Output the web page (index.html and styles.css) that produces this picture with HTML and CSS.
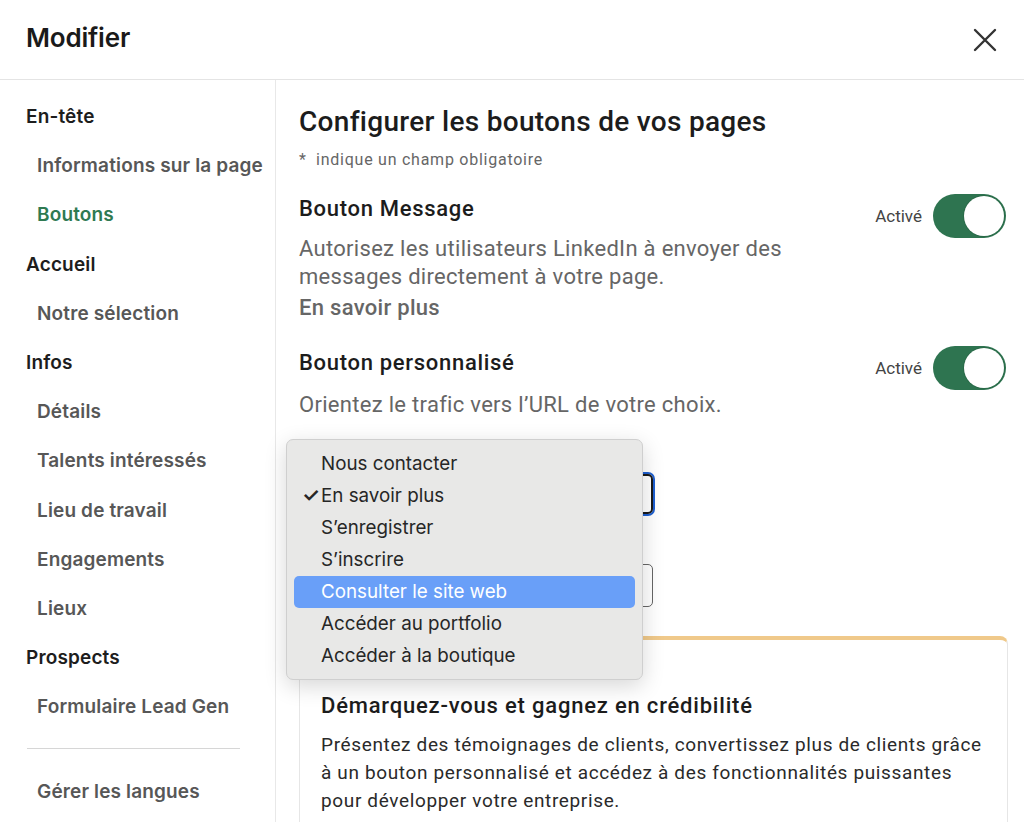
FILE: index.html
```html
<!DOCTYPE html>
<html lang="fr">
<head>
<meta charset="utf-8">
<title>Modifier</title>
<link rel="stylesheet" href="styles.css">
</head>
<body>
<header class="header">
  <h1 class="header-title">Modifier</h1>
  <button class="close" aria-label="Fermer">
    <svg width="24" height="24" viewBox="0 0 24 24"><path d="M2 2 L22 22 M22 2 L2 22" stroke="#333" stroke-width="2.4" stroke-linecap="round" fill="none"/></svg>
  </button>
</header>
<div class="layout">
  <nav class="sidebar">
    <div class="nav-head">En-tête</div>
    <div class="nav-item">Informations sur la page</div>
    <div class="nav-item active">Boutons</div>
    <div class="nav-head">Accueil</div>
    <div class="nav-item">Notre sélection</div>
    <div class="nav-head">Infos</div>
    <div class="nav-item">Détails</div>
    <div class="nav-item">Talents intéressés</div>
    <div class="nav-item">Lieu de travail</div>
    <div class="nav-item">Engagements</div>
    <div class="nav-item">Lieux</div>
    <div class="nav-head">Prospects</div>
    <div class="nav-item">Formulaire Lead Gen</div>
    <hr class="nav-divider">
    <div class="nav-item">Gérer les langues</div>
  </nav>
  <main class="main">
    <h2 class="main-title">Configurer les boutons de vos pages</h2>
    <p class="required">*&nbsp; indique un champ obligatoire</p>

    <section class="setting first">
      <div class="setting-text">
        <h3 class="setting-title">Bouton Message</h3>
        <p class="setting-desc">Autorisez les utilisateurs LinkedIn à envoyer des messages directement à votre page.</p>
        <p class="setting-link">En savoir plus</p>
      </div>
      <div class="toggle-group">
        <span class="toggle-label">Activé</span>
        <span class="toggle"><span class="knob"></span></span>
      </div>
    </section>

    <section class="setting second">
      <div class="setting-text">
        <h3 class="setting-title">Bouton personnalisé</h3>
        <p class="setting-desc desc2">Orientez le trafic vers l’URL de votre choix.</p>
      </div>
      <div class="toggle-group">
        <span class="toggle-label">Activé</span>
        <span class="toggle"><span class="knob"></span></span>
      </div>
    </section>

    <div class="form">
      <div class="select focused"></div>
      <div class="select second-select"></div>
    </div>

    <div class="card">
      <h3 class="card-title">Démarquez-vous et gagnez en crédibilité</h3>
      <p class="card-text">Présentez des témoignages de clients, convertissez plus de clients grâce à un bouton personnalisé et accédez à des fonctionnalités puissantes pour développer votre entreprise.</p>
    </div>

    <ul class="menu">
      <li class="menu-item">Nous contacter</li>
      <li class="menu-item checked"><span class="check">✓</span>En savoir plus</li>
      <li class="menu-item">S’enregistrer</li>
      <li class="menu-item">S’inscrire</li>
      <li class="menu-item hover">Consulter le site web</li>
      <li class="menu-item">Accéder au portfolio</li>
      <li class="menu-item">Accéder à la boutique</li>
    </ul>
  </main>
</div>
</body>
</html>
```
FILE: styles.css
```css
* { box-sizing: border-box; }
html, body { margin: 0; padding: 0; background: #fff; }
body {
  width: 1024px;
  height: 822px;
  overflow: hidden;
  font-family: Inter, "Open Sans", "Liberation Sans", sans-serif;
  color: #1d1d1d;
}

.header {
  height: 80px;
  border-bottom: 1px solid #e4e4e4;
  display: flex;
  align-items: center;
  justify-content: space-between;
  padding: 0 27px 0 26px;
}
.header-title {
  margin: 0 0 4px 0;
  font-size: 26px;
  font-weight: 600;
  letter-spacing: -0.2px;
  color: #1a1a1a;
}
.close {
  border: 0;
  background: none;
  padding: 0;
  width: 24px;
  height: 24px;
  margin-top: 1px;
}

.layout {
  display: flex;
  height: 742px;
}

.sidebar {
  width: 276px;
  flex: none;
  border-right: 1px solid #e8e8e8;
  padding: 12px 0 0 26px;
}
.nav-head, .nav-item {
  height: 49.2px;
  line-height: 49px;
  font-size: 19px;
  font-weight: 600;
  letter-spacing: 0.15px;
  white-space: nowrap;
}
.nav-head { color: #1d1d1d; }
.nav-item { padding-left: 11px; color: #575757; }
.nav-item.active { color: #2f7a52; }
.nav-divider {
  margin: 17px 0 18px 1px;
  width: 213px;
  border: 0;
  border-top: 1px solid #d6d6d6;
}

.main {
  position: relative;
  flex: 1;
  padding: 26px 16px 0 23px;
  font-family: Roboto, "Liberation Sans", sans-serif;
}
.main-title {
  margin: 0;
  font-size: 28px;
  line-height: 32px;
  font-weight: 500;
  color: #1c1c1c;
  letter-spacing: 0.3px;
}
.required {
  margin: 12px 0 0 0;
  font-size: 16px;
  line-height: 20px;
  letter-spacing: 0.75px;
  color: #666;
}

.setting {
  display: flex;
  justify-content: space-between;
  align-items: flex-start;
}
.setting.first { margin-top: 25px; }
.setting.second { margin-top: 27px; }
.setting-title {
  margin: 0;
  font-size: 22px;
  line-height: 28px;
  font-weight: 500;
  letter-spacing: 0.7px;
  color: #1c1c1c;
}
.setting-desc {
  margin: 12px 0 0 0;
  width: 520px;
  font-size: 22px;
  line-height: 28px;
  letter-spacing: 0.3px;
  color: #666;
}
.setting-desc.desc2 { margin-top: 14px; }
.setting-link {
  margin: 3px 0 0 0;
  font-size: 22px;
  line-height: 28px;
  font-weight: 500;
  letter-spacing: 0.3px;
  color: #666;
}

.toggle-group {
  display: flex;
  align-items: center;
  gap: 11px;
  margin-top: -1px;
  margin-right: 2px;
}
.second .toggle-group { margin-top: -3px; }
.toggle-label {
  font-size: 17px;
  color: #444;
}
.toggle {
  position: relative;
  display: block;
  width: 73px;
  height: 44px;
  border-radius: 22px;
  background: #2e7450;
}
.knob {
  position: absolute;
  right: 2px;
  top: 2px;
  width: 40px;
  height: 40px;
  border-radius: 50%;
  background: #fff;
  box-shadow: 0 0 0 1px #2a6a48;
}

.form { margin-top: 55px; width: 354px; }
.select {
  height: 43px;
  border: 1px solid #666;
  border-radius: 5px;
}
.select.focused {
  border: 2px solid #1a1a1a;
  box-shadow: 0 0 0 2px #1d5fd0;
  height: 40px;
}
.select.second-select { margin-top: 50px; }

.card {
  margin-top: 29px;
  border: 1px solid #e6e6e6;
  border-top: 4px solid #f0c98a;
  border-radius: 8px;
  padding: 52px 20px 20px 21px;
}
.card-title {
  margin: 0;
  font-size: 22px;
  line-height: 28px;
  font-weight: 500;
  letter-spacing: 0.8px;
  color: #1c1c1c;
}
.card-text {
  margin: 11px 0 0 0;
  font-size: 19px;
  line-height: 28px;
  letter-spacing: 0.64px;
  color: #2a2a2a;
}

.menu {
  position: absolute;
  left: 10px;
  top: 359px;
  width: 357px;
  height: 241px;
  margin: 0;
  padding: 8px 7px;
  list-style: none;
  background: #e8e8e7;
  border: 1px solid #cfcfcf;
  border-radius: 7px;
  box-shadow: 0 6px 22px rgba(0,0,0,0.16);
  font-family: Inter, "Open Sans", "Liberation Sans", sans-serif;
}
.menu-item {
  position: relative;
  height: 32px;
  line-height: 31px;
  padding-left: 27px;
  font-size: 18.8px;
  color: #262626;
  border-radius: 5px;
}
.menu-item.hover {
  background: #699ff8;
  color: #fff;
}
.check {
  position: absolute;
  left: 8px;
  top: 0;
  font-size: 20px;
  font-weight: 600;
  color: #262626;
}
```
